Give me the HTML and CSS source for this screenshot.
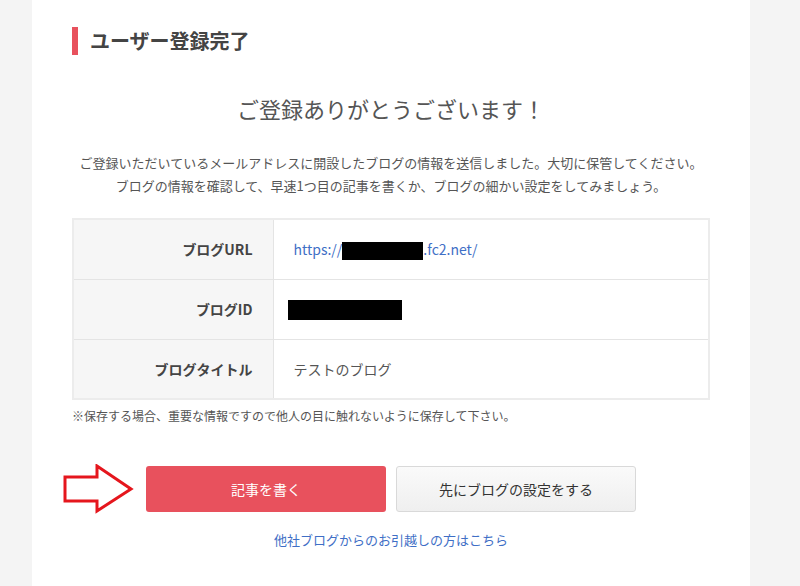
FILE: index.html
```html
<!DOCTYPE html>
<html lang="ja">

<head>
  <meta charset="UTF-8">
  <meta name="viewport" content="width=device-width, initial-scale=1.0">
  <title>ユーザー登録完了</title>
  <link rel="stylesheet" href="styles.css">
</head>

<body>
<div class="panel">
  <h2 class="page_title">ユーザー登録完了</h2>

  <h1 class="thanks">ご登録ありがとうございます！</h1>

  <p class="lead">
    ご登録いただいているメールアドレスに開設したブログの情報を送信しました。大切に保管してください。<br>
    ブログの情報を確認して、早速1つ目の記事を書くか、ブログの細かい設定をしてみましょう。
  </p>

  <table class="info_table">
    <tr>
      <th>ブログURL</th>
      <td><a href="#" class="blog_url">https://<span class="masked masked_url"></span>.fc2.net/</a></td>
    </tr>
    <tr>
      <th>ブログID</th>
      <td><span class="masked masked_id"></span></td>
    </tr>
    <tr>
      <th>ブログタイトル</th>
      <td>テストのブログ</td>
    </tr>
  </table>

  <p class="note">※保存する場合、重要な情報ですので他人の目に触れないように保存して下さい。</p>

  <div class="actions">
    <svg class="arrow" width="72" height="50" viewBox="0 0 72 50">
      <polygon points="3,13 35,13 35,2 69,25 35,47 35,37 3,37" fill="none" stroke="#e5161d" stroke-width="3"/>
    </svg>
    <a href="#" class="btn btn_primary">記事を書く</a>
    <a href="#" class="btn btn_default">先にブログの設定をする</a>
  </div>

  <p class="move_link"><a href="#">他社ブログからのお引越しの方はこちら</a></p>
</div>
</body>

</html>
```

FILE: styles.css
```css
* {
    box-sizing: border-box;
}

body {
    margin: 0;
    background-color: #f4f4f4;
    font-family: 'Noto Sans CJK JP', 'Noto Sans', sans-serif;
    color: #555;
}

a {
    color: #3f6fc6;
    text-decoration: none;
}

.panel {
    width: 718px;
    min-height: 586px;
    margin-left: 32px;
    padding: 27px 40px 20px 40px;
    background-color: #fff;
}

.page_title {
    margin: 0;
    height: 28px;
    line-height: 28px;
    padding-left: 12px;
    border-left: 6px solid #e8515d;
    font-size: 20px;
    font-weight: bold;
    color: #444;
}

.thanks {
    margin: 37px 0 0 0;
    font-size: 22px;
    line-height: 32px;
    font-weight: normal;
    text-align: center;
    color: #555;
}

.lead {
    margin: 27px 0 0 0;
    font-size: 13px;
    line-height: 23px;
    text-align: center;
}

.info_table {
    width: 100%;
    margin-top: 21px;
    border-collapse: collapse;
    border: 2px solid #ececec;
}

.info_table th,
.info_table td {
    height: 60px;
    border: 1px solid #e4e4e4;
    font-size: 14px;
}

.info_table th {
    width: 200px;
    padding-right: 20px;
    text-align: right;
    background-color: #f6f6f6;
    color: #444;
    font-weight: bold;
}

.info_table td {
    padding-left: 20px;
    color: #555;
}

.blog_url {
    color: #3f6fc6;
}

.masked {
    display: inline-block;
    background-color: #000;
    vertical-align: middle;
}

.masked_url {
    width: 81px;
    height: 18px;
}

.masked_id {
    width: 114px;
    height: 20px;
    margin-left: -6px;
}

.note {
    margin: 7px 0 0 0;
    font-size: 12px;
    line-height: 18px;
    color: #555;
}

.actions {
    position: relative;
    display: flex;
    justify-content: center;
    gap: 10px;
    margin-top: 41px;
}

.arrow {
    position: absolute;
    left: -10px;
    top: -2px;
}

.btn {
    display: flex;
    align-items: center;
    justify-content: center;
    width: 240px;
    height: 46px;
    border-radius: 3px;
    font-size: 14px;
}

.btn_primary {
    background-color: #e8515d;
    color: #fff;
}

.btn_default {
    border: 1px solid #d9d9d9;
    background: linear-gradient(#fafafa, #efefef);
    color: #333;
}

.move_link {
    margin: 18px 0 0 0;
    font-size: 13px;
    line-height: 20px;
    text-align: center;
}
```
